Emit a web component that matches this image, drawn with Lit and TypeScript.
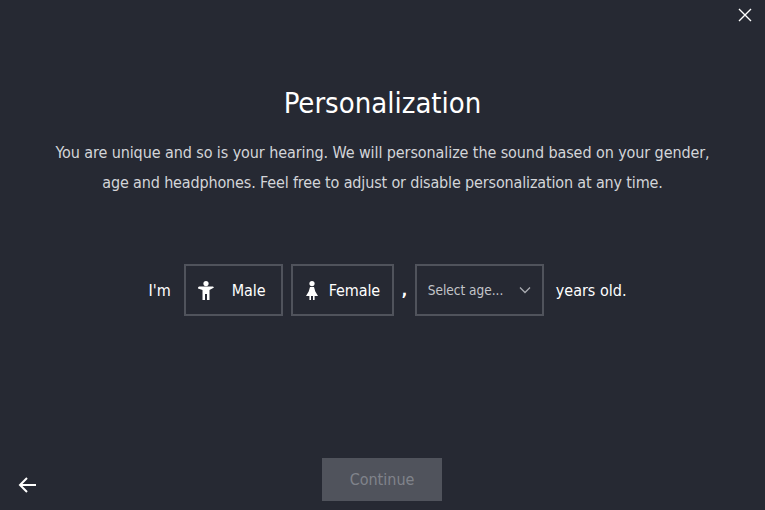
import { LitElement, html, css } from "lit";
import { customElement } from "lit/decorators.js";

@customElement("app-root")
export class AppRoot extends LitElement {
  static styles = css`
    :host { display: block; width: 765px; height: 510px; background: #262933; color: #fff; font-family: "DejaVu Sans Condensed", "DejaVu Sans", sans-serif; overflow: hidden; position: relative; }
    .page { display: flex; flex-direction: column; align-items: center; height: 510px; box-sizing: border-box; padding-top: 84px; }
    h1 { margin: 0; font-size: 29px; line-height: 38px; font-weight: 400; color: #fff; }
    p { margin: 16px 0 0; font-size: 16px; letter-spacing: -0.09px; line-height: 30px; color: #d3d5d9; text-align: center; white-space: nowrap; }
    .second { display: block; letter-spacing: -0.15px; }
    .row { display: flex; align-items: center; margin: 66px 0 0 10px; font-size: 16px; height: 52px; color: #fff; }
    .box { box-sizing: border-box; height: 52px; border: 2px solid #50535c; display: flex; align-items: center; }
    .male { width: 99px; margin-left: 13px; padding-left: 12px; }
    .male span { margin-left: 18px; letter-spacing: -0.1px; }
    .female { width: 103px; margin-left: 8px; padding-left: 13px; }
    .female span { margin-left: 11px; letter-spacing: -0.1px; }
    .comma { margin-left: 8px; width: 13px; font-weight: 700; }
    .select { width: 129px; padding-left: 11px; font-size: 13.5px; color: #c3c5ca; }
    .select svg { margin-left: 16px; }
    .years { margin-left: 12px; }
    .continue { margin: auto 1px 9px 0; width: 120px; height: 43px; border: none; background: #50535c; color: #80838b; font: inherit; font-size: 16px; padding: 0; }
    .icon { position: absolute; display: block; }
    .close { top: 7px; right: 12px; }
    .back { left: 18px; bottom: 16px; }
  `;
  render() {
    return html`
      <div class="page">
        <h1>Personalization</h1>
        <p>You are unique and so is your hearing. We will personalize the sound based on your gender,<span class="second">age and headphones. Feel free to adjust or disable personalization at any time.</span></p>
        <div class="row">
          <span>I'm</span>
          <div class="box male">
            <svg width="16" height="19" viewBox="0 0 16 19" fill="#fff"><circle cx="8" cy="2.6" r="2.6"/><path d="M0 6.5L1 5.6h14l1 .9L11.5 9v10H9v-6H7v6H4.5V9L0 7.5z"/></svg>
            <span>Male</span>
          </div>
          <div class="box female">
            <svg width="12" height="19" viewBox="0 0 12 19" fill="#fff"><circle cx="6" cy="2.6" r="2.6"/><path d="M4 6h4l1.3 4.5L12 15H8.6v4H7v-4H5v4H3.4v-4H0l2.7-4.5z"/></svg>
            <span>Female</span>
          </div>
          <span class="comma">,</span>
          <div class="box select">
            <span>Select age...</span>
            <svg width="12" height="8" viewBox="0 0 12 8" fill="none" stroke="#a9abb1" stroke-width="1.3"><path d="M1 1.5l5 5 5-5"/></svg>
          </div>
          <span class="years">years old.</span>
        </div>
        <button class="continue">Continue</button>
      </div>
      <svg class="icon close" width="16" height="16" viewBox="0 0 16 16" stroke="#fff" stroke-width="1.4" fill="none"><path d="M2 2l12 12M14 2L2 14"/></svg>
      <svg class="icon back" width="20" height="18" viewBox="0 0 20 18" stroke="#fff" stroke-width="2" fill="none"><path d="M18 9H2M9 2L2 9l7 7"/></svg>
    `;
  }
}
